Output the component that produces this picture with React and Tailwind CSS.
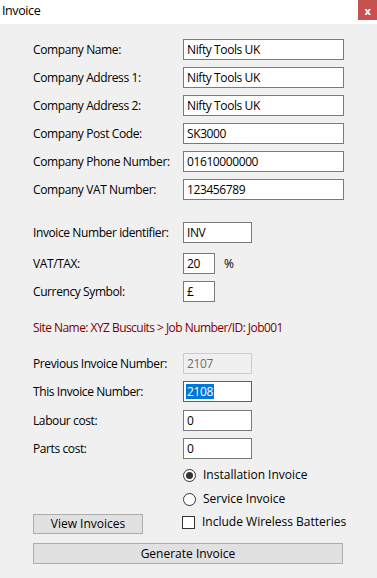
import React from "react";

function Row({ label, children, className = "" }) {
  return (
    <div className={"flex items-center h-[21px] " + className}>
      <div className="w-[150px] shrink-0">{label}</div>
      {children}
    </div>
  );
}

function Field({ value, w = "w-[161px]" }) {
  return (
    <div className={"h-[21px] border border-[#7a7a7a] bg-white pl-[3px] flex items-center leading-none " + w}>
      {value}
    </div>
  );
}

export default function App() {
  return (
    <div
      className="w-[377px] h-[578px] bg-[#f0f0f0] text-[12px] tracking-[-0.4px] text-black flex flex-col overflow-hidden"
      style={{ fontFamily: '"Open Sans", "Noto Sans", sans-serif' }}
    >
      <div className="h-[24px] bg-white flex justify-between shrink-0">
        <div className="pl-[2px] pt-[3px] text-[12.5px] leading-[16px]">Invoice</div>
        <div className="w-[19px] h-[20px] bg-[#c75050] text-white flex items-center justify-center text-[11px] font-bold leading-none">
          x
        </div>
      </div>
      <div className="flex flex-col pl-[33px] pt-[15px]">
        <div className="flex flex-col gap-[7px]">
          <Row label="Company Name:"><Field value="Nifty Tools UK" /></Row>
          <Row label="Company Address 1:"><Field value="Nifty Tools UK" /></Row>
          <Row label="Company Address 2:"><Field value="Nifty Tools UK" /></Row>
          <Row label="Company Post Code:"><Field value="SK3000" /></Row>
          <Row label="Company Phone Number:"><Field value="01610000000" /></Row>
          <Row label="Company VAT Number:"><Field value="123456789" /></Row>
        </div>
        <Row label="Invoice Number identifier:" className="mt-[22px]">
          <Field value="INV" w="w-[69px]" />
        </Row>
        <Row label="VAT/TAX:" className="mt-[10px]">
          <Field value="20" w="w-[32px]" />
          <span className="ml-[9px]">%</span>
        </Row>
        <Row label="Currency Symbol:" className="mt-[7px]">
          <Field value="£" w="w-[32px]" />
        </Row>
        <div className="mt-[17px] h-[17px] leading-[17px] text-[#800000] tracking-[-0.55px]">
          Site Name: XYZ Buscuits &gt; Job Number/ID: Job001
        </div>
        <Row label="Previous Invoice Number:" className="mt-[17px]">
          <div className="h-[21px] w-[69px] border border-[#cccccc] bg-[#f0f0f0] pl-[3px] flex items-center text-[#6d6d6d] leading-none">
            2107
          </div>
        </Row>
        <Row label="This Invoice Number:" className="mt-[7px]">
          <div className="h-[21px] w-[69px] border border-[#0078d7] bg-white pl-[2px] flex items-center leading-none">
            <span className="bg-[#0078d7] text-white px-[1px] h-[15px] flex items-center">2108</span>
          </div>
        </Row>
        <Row label="Labour cost:" className="mt-[8px]">
          <Field value="0" w="w-[69px]" />
        </Row>
        <Row label="Parts cost:" className="mt-[7px]">
          <Field value="0" w="w-[69px]" />
        </Row>
        <div className="flex items-center h-[16px] mt-[8px] pl-[150px] tracking-normal">
          <span className="w-[13px] h-[13px] rounded-full border border-[#333] bg-white flex items-center justify-center">
            <span className="w-[7px] h-[7px] rounded-full bg-[#333]" />
          </span>
          <span className="ml-[7px]">Installation Invoice</span>
        </div>
        <div className="flex items-center h-[16px] mt-[8px] pl-[150px] tracking-normal">
          <span className="w-[13px] h-[13px] rounded-full border border-[#333] bg-white" />
          <span className="ml-[7px]">Service Invoice</span>
        </div>
        <div className="flex items-start mt-[7px] tracking-normal">
          <button className="w-[110px] h-[20px] bg-[#e1e1e1] border border-[#adadad] flex items-center justify-center leading-none">
            View Invoices
          </button>
          <div className="ml-[39px] flex items-center h-[16px]">
            <span className="w-[13px] h-[13px] border border-[#333] bg-white" />
            <span className="ml-[7px]">Include Wireless Batteries</span>
          </div>
        </div>
        <button className="mt-[9px] w-[310px] h-[21px] bg-[#e1e1e1] border border-[#adadad] flex items-center justify-center leading-none tracking-normal">
          Generate Invoice
        </button>
      </div>
    </div>
  );
}
